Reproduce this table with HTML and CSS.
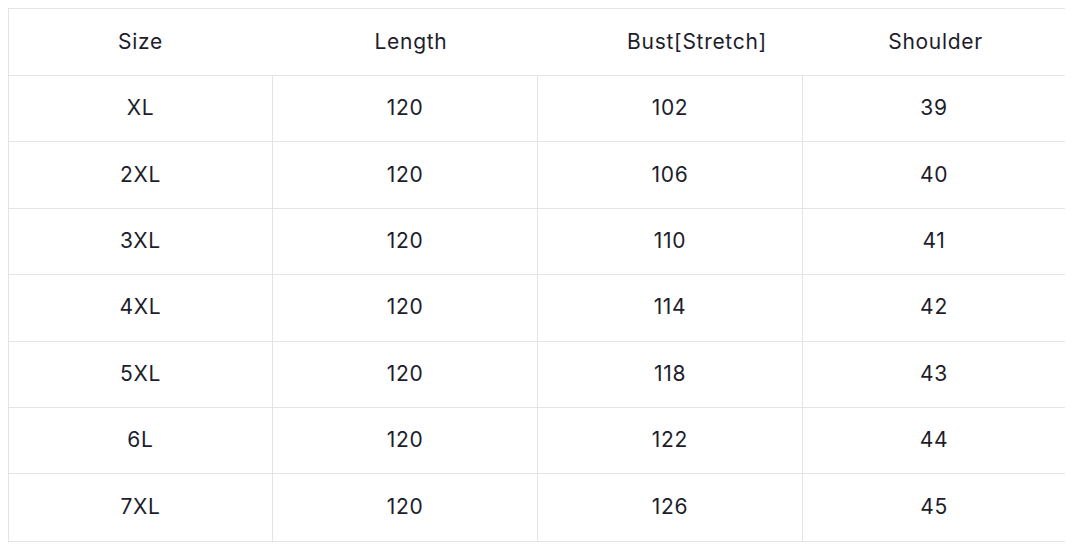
FILE: index.html
```html
<!DOCTYPE html>
<html>
<head>
<meta charset="utf-8">
<link rel="stylesheet" href="styles.css">
</head>
<body>
<div class="chart">
  <div class="head">
    <div class="hcell">Size</div>
    <div class="hcell">Length</div>
    <div class="hcell">Bust[Stretch]</div>
    <div class="hcell hlast">Shoulder</div>
  </div>
  <div class="row"><div class="cell">XL</div><div class="cell">120</div><div class="cell">102</div><div class="cell">39</div></div>
  <div class="row"><div class="cell">2XL</div><div class="cell">120</div><div class="cell">106</div><div class="cell">40</div></div>
  <div class="row"><div class="cell">3XL</div><div class="cell">120</div><div class="cell">110</div><div class="cell">41</div></div>
  <div class="row"><div class="cell">4XL</div><div class="cell">120</div><div class="cell">114</div><div class="cell">42</div></div>
  <div class="row"><div class="cell">5XL</div><div class="cell">120</div><div class="cell">118</div><div class="cell">43</div></div>
  <div class="row"><div class="cell">6L</div><div class="cell">120</div><div class="cell">122</div><div class="cell">44</div></div>
  <div class="row"><div class="cell">7XL</div><div class="cell">120</div><div class="cell">126</div><div class="cell">45</div></div>
</div>
</body>
</html>
```
FILE: styles.css
```css
html, body {
  background: #ffffff;
}
body {
  margin: 8px;
  font-family: "Inter", "Liberation Sans", sans-serif;
  color: #1d1d2c;
  font-size: 21px;
  letter-spacing: 0.7px;
}
.chart {
  width: 1058px;
  box-sizing: border-box;
  border: 1px solid #e4e4e8;
}
.head {
  display: grid;
  grid-template-columns: 263px 278px 294px 1fr;
  height: 66px;
  border-bottom: 1px solid #e4e4e8;
}
.hcell {
  display: flex;
  align-items: center;
  justify-content: center;
  padding-bottom: 2px;
}
.hlast {
  padding-right: 38px;
}
.row {
  display: grid;
  grid-template-columns: 263px 265px 265px 1fr;
  height: 66.4px;
  box-sizing: border-box;
  border-bottom: 1px solid #e4e4e8;
}
.row:last-child {
  border-bottom: none;
}
.cell {
  display: flex;
  align-items: center;
  justify-content: center;
  padding-bottom: 2px;
  border-left: 1px solid #e4e4e8;
}
.cell:first-child {
  border-left: none;
}
```
